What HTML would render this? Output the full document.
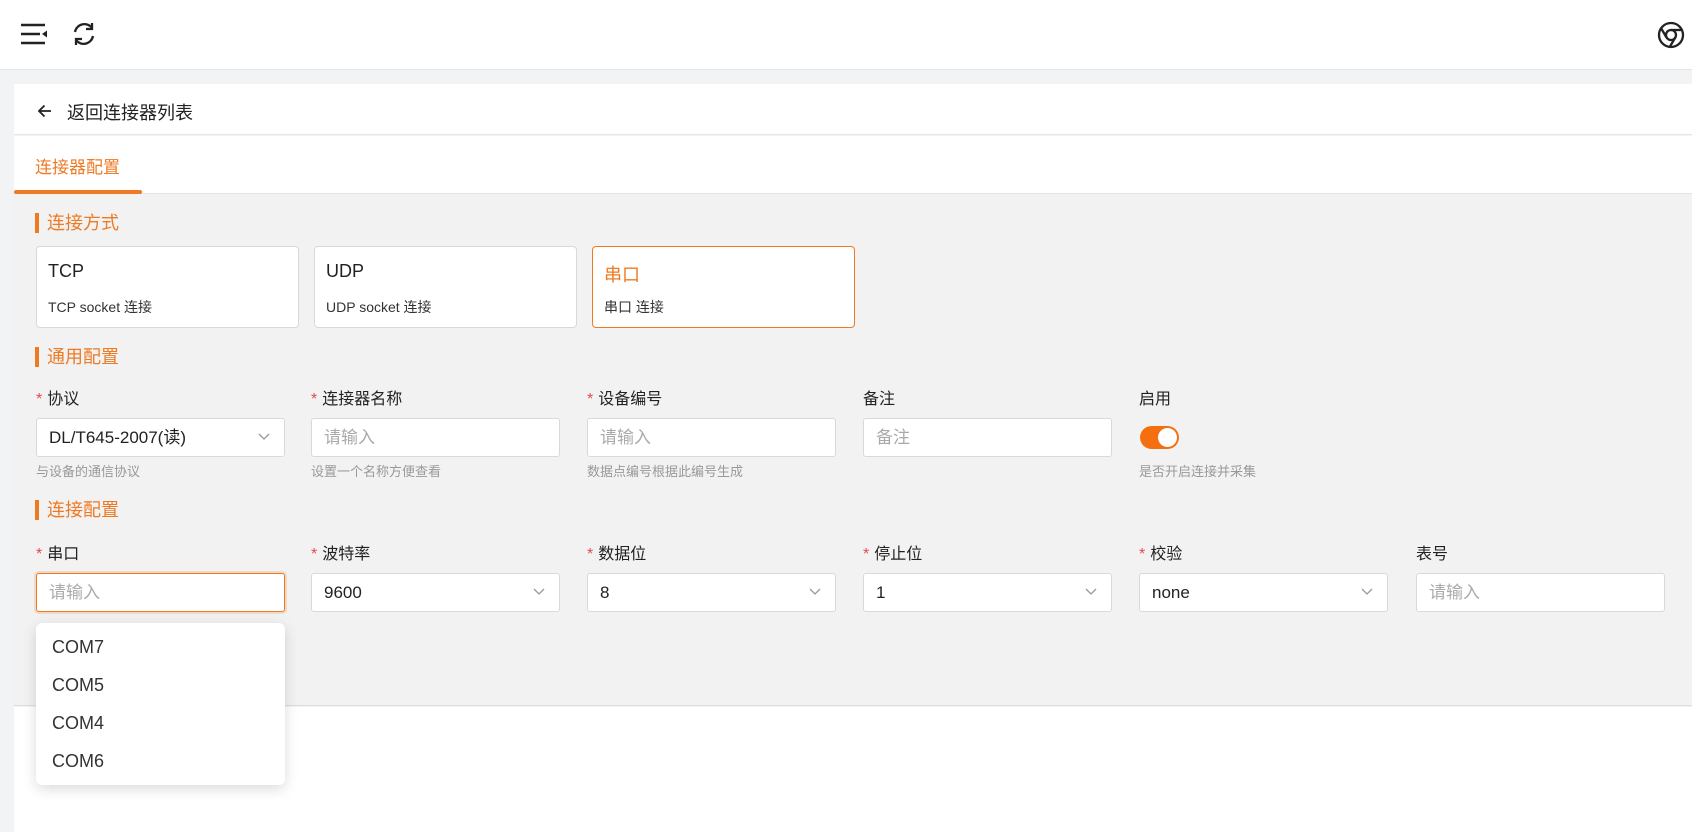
<!DOCTYPE html>
<html><head><meta charset="utf-8"><style>
*{box-sizing:border-box;margin:0;padding:0}
body{width:1692px;height:832px;position:relative;overflow:hidden;background:#fff;font-family:"Liberation Sans","Noto Sans CJK SC",sans-serif;color:#222}
.a{position:absolute}
.top{left:0;top:0;width:1692px;height:70px;background:#fff;border-bottom:1px solid #e4e4e4}
.bg{left:0;top:70px;width:1692px;height:762px;background:#f2f3f5}
.hdr{left:14px;top:84px;width:1678px;height:51px;background:#fff;border-bottom:1px solid #e6e6e6}
.tabs{left:14px;top:136px;width:1678px;height:58px;background:#fff;border-bottom:1px solid #e4e4e4}
.body{left:14px;top:194px;width:1678px;height:512px;background:#f2f2f2;border-bottom:1px solid #ddd}
.below{left:14px;top:707px;width:1678px;height:125px;background:#fff}
.sec{font-size:18px;color:#ef7a24;line-height:22px;padding-left:12px}
.sec:before{content:"";position:absolute;left:0;top:1px;width:4px;height:20px;background:#ef7a24}
.card{width:263px;height:82px;background:#fff;border:1px solid #d9d9d9;border-radius:4px}
.card .t{position:absolute;left:11px;top:14px;font-size:18px}
.card .s{position:absolute;left:11px;top:50px;font-size:14px;color:#333}
.lbl{font-size:16px;color:#222;line-height:20px}
.lbl i{font-style:normal;color:#e5484d;margin-right:5px}
.inp{width:249px;height:39px;background:#fff;border:1px solid #d9d9d9;border-radius:3px;font-size:17px;line-height:37px;padding-left:12px;color:#222}
.inp.ph{color:#aaa}
.inp svg{position:absolute;right:14px;top:14px}
.help{font-size:13px;color:#999}
.dd{left:36px;top:623px;width:249px;height:162px;background:#fff;border-radius:6px;box-shadow:0 4px 14px rgba(0,0,0,.14)}
.dd div{position:absolute;left:16px;font-size:18px;color:#333}
</style></head><body>
<div class="a top"></div>
<svg class="a" style="left:21px;top:22px" width="27" height="24" viewBox="0 0 27 24"><g stroke="#222" stroke-width="2.4"><line x1="0" y1="3" x2="24" y2="3"/><line x1="0" y1="12" x2="19" y2="12"/><line x1="0" y1="21" x2="24" y2="21"/></g><path d="M26 8.5 L21 12 L26 15.5Z" fill="#222"/></svg>
<svg class="a" style="left:71px;top:21px" width="26" height="26" viewBox="0 0 26 26" fill="none" stroke="#222" stroke-width="2.3"><path d="M4 11 A9.5 9.5 0 0 1 21 7"/><path d="M22 15 A9.5 9.5 0 0 1 5 19"/><path d="M21 2 V8 H15" /><path d="M5 24 V18 H11"/></svg>
<svg class="a" style="left:1657px;top:21px" width="28" height="28" viewBox="0 0 28 28" fill="none" stroke="#222" stroke-width="2.3"><circle cx="14" cy="14" r="12"/><circle cx="14" cy="14" r="5"/><path d="M14 9 H25"/><path d="M9.5 16.5 L4 7"/><path d="M18.3 16.5 L13 25.5"/></svg>
<div class="a bg"></div>
<div class="a hdr"></div>
<svg class="a" style="left:37px;top:103px" width="16" height="16" viewBox="0 0 16 16" fill="none" stroke="#222" stroke-width="1.8"><path d="M14 8 H2 M7.5 2.5 L2 8 L7.5 13.5"/></svg>
<div class="a" style="left:67px;top:99px;font-size:18px;color:#222">返回连接器列表</div>
<div class="a tabs"></div>
<div class="a" style="left:35px;top:153px;font-size:17px;color:#ef7a24">连接器配置</div>
<div class="a" style="left:14px;top:190px;width:128px;height:4px;background:#ef7a24;border-radius:2px"></div>
<div class="a body"></div>
<div class="a below"></div>

<div class="a sec" style="left:35px;top:212px">连接方式</div>
<div class="a card" style="left:36px;top:246px"><span class="t">TCP</span><span class="s">TCP socket 连接</span></div>
<div class="a card" style="left:314px;top:246px"><span class="t">UDP</span><span class="s">UDP socket 连接</span></div>
<div class="a card" style="left:592px;top:246px;border-color:#ef7a24"><span class="t" style="color:#ef7a24">串口</span><span class="s">串口 连接</span></div>

<div class="a sec" style="left:35px;top:346px">通用配置</div>
<div class="a lbl" style="left:36px;top:390px"><i>*</i>协议</div>
<div class="a lbl" style="left:311px;top:390px"><i>*</i>连接器名称</div>
<div class="a lbl" style="left:587px;top:390px"><i>*</i>设备编号</div>
<div class="a lbl" style="left:863px;top:390px">备注</div>
<div class="a lbl" style="left:1139px;top:390px">启用</div>
<div class="a inp" style="left:36px;top:418px">DL/T645-2007(读)<svg width="12" height="8" viewBox="0 0 12 8"><path d="M1 1 L6 6 L11 1" fill="none" stroke="#999" stroke-width="1.3"/></svg></div>
<div class="a inp ph" style="left:311px;top:418px">请输入</div>
<div class="a inp ph" style="left:587px;top:418px">请输入</div>
<div class="a inp ph" style="left:863px;top:418px">备注</div>
<div class="a" style="left:1140px;top:426px;width:39px;height:23px;border-radius:12px;background:#f56f10"><div class="a" style="left:18px;top:2px;width:19px;height:19px;border-radius:50%;background:#fff"></div></div>
<div class="a help" style="left:36px;top:461px">与设备的通信协议</div>
<div class="a help" style="left:311px;top:461px">设置一个名称方便查看</div>
<div class="a help" style="left:587px;top:461px">数据点编号根据此编号生成</div>
<div class="a help" style="left:1139px;top:461px">是否开启连接并采集</div>

<div class="a sec" style="left:35px;top:499px">连接配置</div>
<div class="a lbl" style="left:36px;top:545px"><i>*</i>串口</div>
<div class="a lbl" style="left:311px;top:545px"><i>*</i>波特率</div>
<div class="a lbl" style="left:587px;top:545px"><i>*</i>数据位</div>
<div class="a lbl" style="left:863px;top:545px"><i>*</i>停止位</div>
<div class="a lbl" style="left:1139px;top:545px"><i>*</i>校验</div>
<div class="a lbl" style="left:1416px;top:545px">表号</div>
<div class="a inp ph" style="left:36px;top:573px;border-color:#ef7a24;box-shadow:0 0 0 2px rgba(239,122,36,.2)">请输入</div>
<div class="a inp" style="left:311px;top:573px">9600<svg width="12" height="8" viewBox="0 0 12 8"><path d="M1 1 L6 6 L11 1" fill="none" stroke="#999" stroke-width="1.3"/></svg></div>
<div class="a inp" style="left:587px;top:573px">8<svg width="12" height="8" viewBox="0 0 12 8"><path d="M1 1 L6 6 L11 1" fill="none" stroke="#999" stroke-width="1.3"/></svg></div>
<div class="a inp" style="left:863px;top:573px">1<svg width="12" height="8" viewBox="0 0 12 8"><path d="M1 1 L6 6 L11 1" fill="none" stroke="#999" stroke-width="1.3"/></svg></div>
<div class="a inp" style="left:1139px;top:573px">none<svg width="12" height="8" viewBox="0 0 12 8"><path d="M1 1 L6 6 L11 1" fill="none" stroke="#999" stroke-width="1.3"/></svg></div>
<div class="a inp ph" style="left:1416px;top:573px">请输入</div>

<div class="a dd">
<div style="top:14px">COM7</div>
<div style="top:52px">COM5</div>
<div style="top:90px">COM4</div>
<div style="top:128px">COM6</div>
</div>
</body></html>
